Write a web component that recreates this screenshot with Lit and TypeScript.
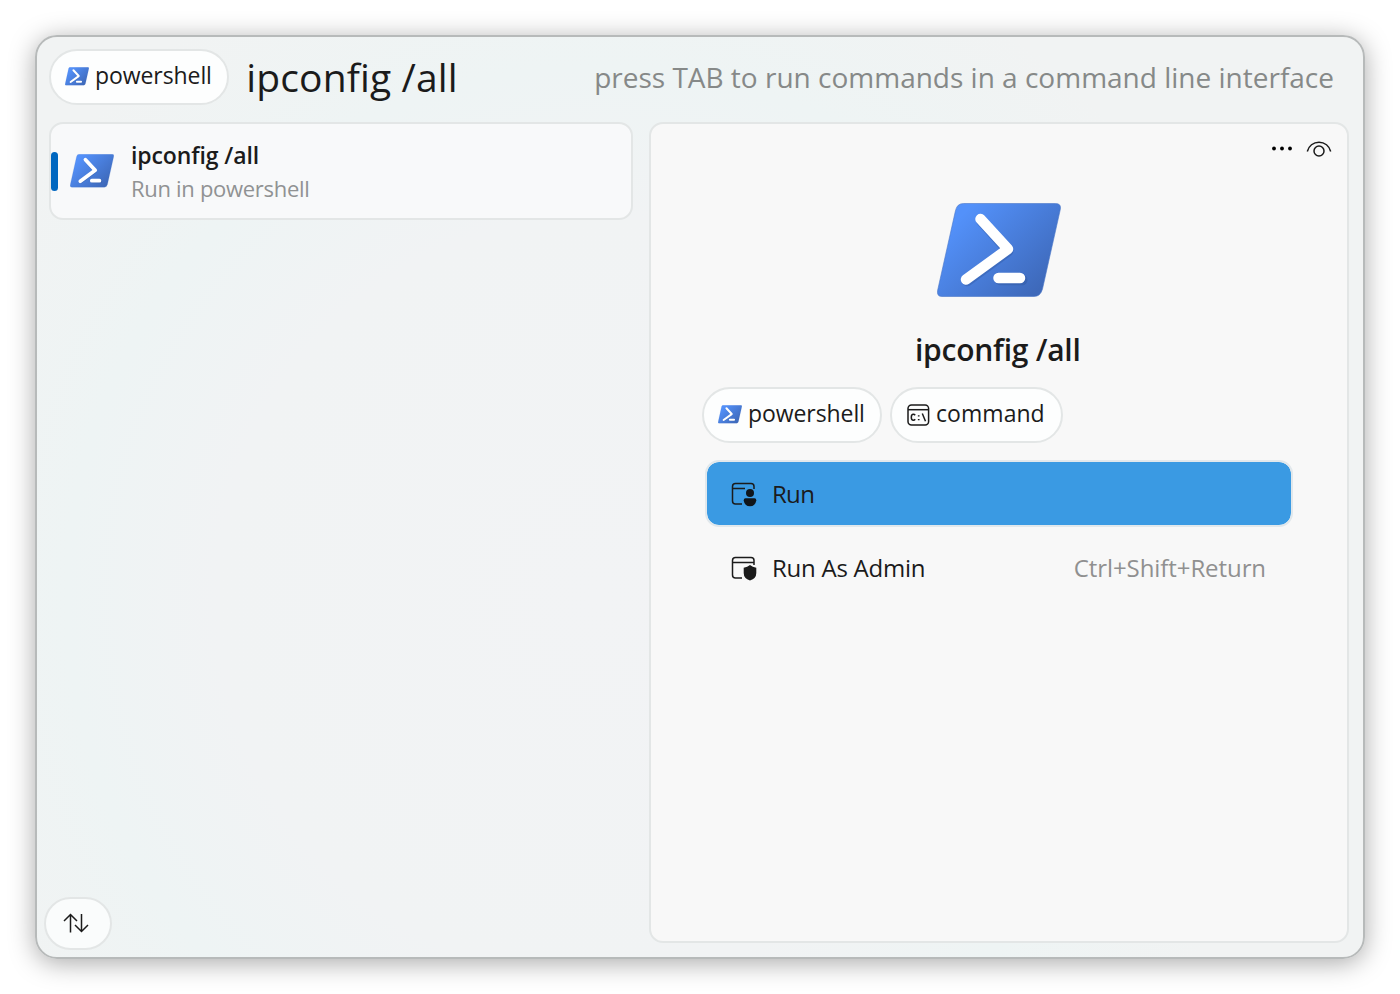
import { LitElement, html, css, svg } from "lit";
import { customElement, property } from "lit/decorators.js";

@customElement("ps-logo")
class PsLogo extends LitElement {
  static styles = css`
    :host { display: block; flex: none; }
    svg { display: block; width: 100%; height: 100%; }
  `;
  render() {
    return html`<svg viewBox="0 0 124 94">
      <defs>
        <linearGradient id="g" gradientUnits="userSpaceOnUse" x1="25" y1="12" x2="100" y2="88">
          <stop offset="0" stop-color="#5391fa" />
          <stop offset="1" stop-color="#3e69ba" />
        </linearGradient>
      </defs>
      <path d="M26.500 .5H118.500Q124.500 .5 123.300 6.500L105.500 86Q103.500 93.500 97 93.500H5Q-.7 93.500 .7 87L18.500 7.500Q20 .5 26.500 .5Z" fill="url(#g)" stroke="#4a76c8" stroke-opacity=".6" stroke-width="1"/>
      <path d="M43.500 16.500L70.500 46.500L29.500 76.500M62.500 75.500H84.500" transform="translate(.8 1.500)" fill="none" stroke="#2c4f96" stroke-opacity=".35" stroke-width="10.500" stroke-linecap="round" stroke-linejoin="round"/>
      <path d="M43.500 16L71 46L29 76.500M61.500 75H83" fill="none" stroke="#fff" stroke-width="10.500" stroke-linecap="round" stroke-linejoin="round"/>
    </svg>`;
  }
}

const consoleIcon = svg`
  <rect x="1" y="1" width="20.600" height="20" rx="3.500"/>
  <path d="M1 5.700H21.600"/>
  <path d="M8.200 11.200Q7.500 10.300 6.300 10.300Q4.300 10.300 4.300 13.200Q4.300 16.200 6.300 16.200Q7.500 16.200 8.200 15.200M15.300 9.500L18.500 17.200" />
  <path d="M11.700 11.300V12.500M11.700 15V16.200" stroke-width="1.700"/>`;

@customElement("app-tag")
class AppTag extends LitElement {
  @property() label = "";
  @property() icon = "ps";
  static styles = css`
    :host {
      display: flex; align-items: center; box-sizing: border-box; height: 56px;
      padding: 0 0 0 14px; border: 2px solid #e3e6e6; border-radius: 28px;
      background: #fdfefe; color: #1b1b1b;
      font: 400 23px/30px "Open Sans", sans-serif;
    }
    ps-logo { width: 24px; height: 18.500px; margin: -1px 6px 0 0; }
    svg { width: 24px; height: 22px; margin: -1px 5px 0 1px; fill: none; stroke: #1b1b1b; stroke-width: 1.500; }
    .t { white-space: nowrap; margin-top: -5px; letter-spacing: -.08px; }
    svg + .t { letter-spacing: .05px; }
  `;
  render() {
    return html`${this.icon === "ps"
      ? html`<ps-logo></ps-logo>`
      : html`<svg viewBox="0 0 24 22">${consoleIcon}</svg>`}<span class="t">${this.label}</span>`;
  }
}

@customElement("app-root")
class AppRoot extends LitElement {
  static styles = css`
    :host {
      display: block; box-sizing: border-box; width: 1400px; height: 994px;
      padding: 35px; background: #fff; overflow: hidden;
      font-family: "Open Sans", sans-serif; color: #1b1b1b;
    }
    * { box-sizing: border-box; }
    .win {
      display: flex; flex-direction: column; width: 1330px; height: 924px;
      border: 2px solid #b7baba; border-radius: 22px; padding: 12px 14px 14px 12px;
      background: radial-gradient(circle at 560px 560px, #f2f3f5 0, #f1f3f4 380px, #eef4f4 530px, #f1f3f3 700px);
      box-shadow: 0 4px 26px rgba(0,0,0,.34);
    }
    .bar { display: flex; align-items: center; height: 56px; }
    .bar app-tag { width: 180px; }
    .query { font-size: 39px; line-height: 50px; letter-spacing: .13px; margin: -1px 0 0 17.300px; white-space: nowrap; }
    .hint { font-size: 28px; line-height: 36px; margin: 0 15px 0 auto; color: #868988; white-space: nowrap; }
    .cols { display: flex; gap: 16px; flex: 1; margin-top: 17px; min-height: 0; }
    .left { width: 584px; display: flex; flex-direction: column; }
    .item {
      display: flex; align-items: center; height: 98px; border: 2px solid #e3e6e6;
      border-radius: 14px; background: #f8f9fa;
    }
    .mark { width: 7px; height: 39px; margin-top: 1px; border-radius: 3.500px; background: #0067c0; }
    .item ps-logo { width: 44px; height: 33.400px; margin-left: 12px; }
    .words { margin-left: 17px; display: flex; flex-direction: column; }
    .name { font-weight: 600; font-size: 23px; line-height: 32px; letter-spacing: -.1px; white-space: nowrap; }
    .sub { font-size: 22px; line-height: 32px; letter-spacing: -.3px; padding-top: 1px; margin-bottom: -1px; color: #909293; white-space: nowrap; }
    .sort {
      margin: auto 0 -7px -5px; width: 67.500px; height: 53px; border: 2px solid #e3e6e6; border-radius: 27px;
      background: #fafcfc; display: grid; place-items: center; padding: 0 3.500px 1px 0;
    }
    .sort svg { width: 28px; height: 22px; fill: none; stroke: #1b1b1b; stroke-width: 1.500; }
    .panel {
      width: 700px; height: 821px; border: 2px solid #e3e6e6; border-radius: 14px; background: #f8f8f8;
      display: flex; flex-direction: column; padding: 14px 15px 0 51px;
    }
    .tools { display: flex; justify-content: flex-end; height: 20px; }
    .tools svg { width: 62px; height: 20px; }
    .hero { width: 124px; height: 94px; margin: 45px 0 0 235px; }
    .title { font-weight: 600; font-size: 30px; line-height: 40px; letter-spacing: -.25px; margin: 33px 0 0 213px; white-space: nowrap; }
    .tags { display: flex; gap: 8px; margin-top: 17px; }
    .tags .a { width: 180px; }
    .tags .b { width: 173px; }
    .act {
      display: flex; align-items: center; width: 588px; height: 67px; margin: 17px 0 0 3px; padding: 0 25px 0 24px;
      border: 2px solid #e1e8ec; border-radius: 14px; background: #3a9ae3; background-clip: padding-box;
      font-size: 24px; line-height: 32px; letter-spacing: -.25px; white-space: nowrap;
    }
    .act.plain { border-color: transparent; background: none; margin-top: 7px; }
    .act svg { width: 27px; height: 26px; margin-top: 2px; fill: none; stroke: #1b1b1b; stroke-width: 1.500; }
    .act .lbl { margin-left: 14px; }
    .act .run { letter-spacing: -.7px; }
    .key { margin-left: auto; letter-spacing: -.08px; color: #909090; }
  `;
  render() {
    return html`
      <div class="win">
        <div class="bar">
          <app-tag label="powershell"></app-tag>
          <span class="query">ipconfig /all</span>
          <span class="hint">press TAB to run commands in a command line interface</span>
        </div>
        <div class="cols">
          <div class="left">
            <div class="item">
              <div class="mark"></div>
              <ps-logo></ps-logo>
              <div class="words"><span class="name">ipconfig /all</span><span class="sub">Run in powershell</span></div>
            </div>
            <div class="sort">
              <svg viewBox="0 0 28 22"><path d="M8.500 20.500V2.500M2 9L8.500 2.500L15 9M19.500 2V19.500M13 13L19.500 19.500L26 13"/></svg>
            </div>
          </div>
          <div class="panel">
            <div class="tools">
              <svg viewBox="0 0 62 20">
                <circle cx="4" cy="10.500" r="1.900"/><circle cx="12" cy="10.500" r="1.900"/><circle cx="20" cy="10.500" r="1.900"/>
                <g fill="none" stroke="#1b1b1b" stroke-width="1.500"><path d="M37.300 13.500A12 12 0 0 1 60.700 13.500"/><circle cx="49" cy="13" r="5"/></g>
              </svg>
            </div>
            <ps-logo class="hero"></ps-logo>
            <div class="title">ipconfig /all</div>
            <div class="tags"><app-tag class="a" label="powershell"></app-tag><app-tag class="b" icon="console" label="command"></app-tag></div>
            <div class="act">
              <svg viewBox="0 0 27 26"><path d="M23 7V4.500Q23 1.500 20 1.500H4.500Q1.500 1.500 1.500 4.500V19Q1.500 22 4.500 22H11M1.500 6.500H14"/><g fill="#10151a" stroke="none"><circle cx="19" cy="11" r="4"/><path d="M14.500 16.300H23.500Q25.300 16.300 25.300 18.500Q24.300 24.300 19 24.300Q13.600 24.300 12.700 18.500Q12.700 16.300 14.500 16.300Z"/></g></svg>
              <span class="lbl run">Run</span>
            </div>
            <div class="act plain">
              <svg viewBox="0 0 27 26"><path d="M23 9V4.500Q23 1.500 20 1.500H4.500Q1.500 1.500 1.500 4.500V19Q1.500 22 4.500 22H11M1.500 6.500H23"/><path fill="#1b1b1b" stroke="none" d="M19 9Q21.500 11.300 25.300 11.800V17Q25.300 22.500 19 24.500Q12.700 22.500 12.700 17V11.800Q16.500 11.300 19 9Z"/></svg>
              <span class="lbl">Run As Admin</span><span class="key">Ctrl+Shift+Return</span>
            </div>
          </div>
        </div>
      </div>`;
  }
}
